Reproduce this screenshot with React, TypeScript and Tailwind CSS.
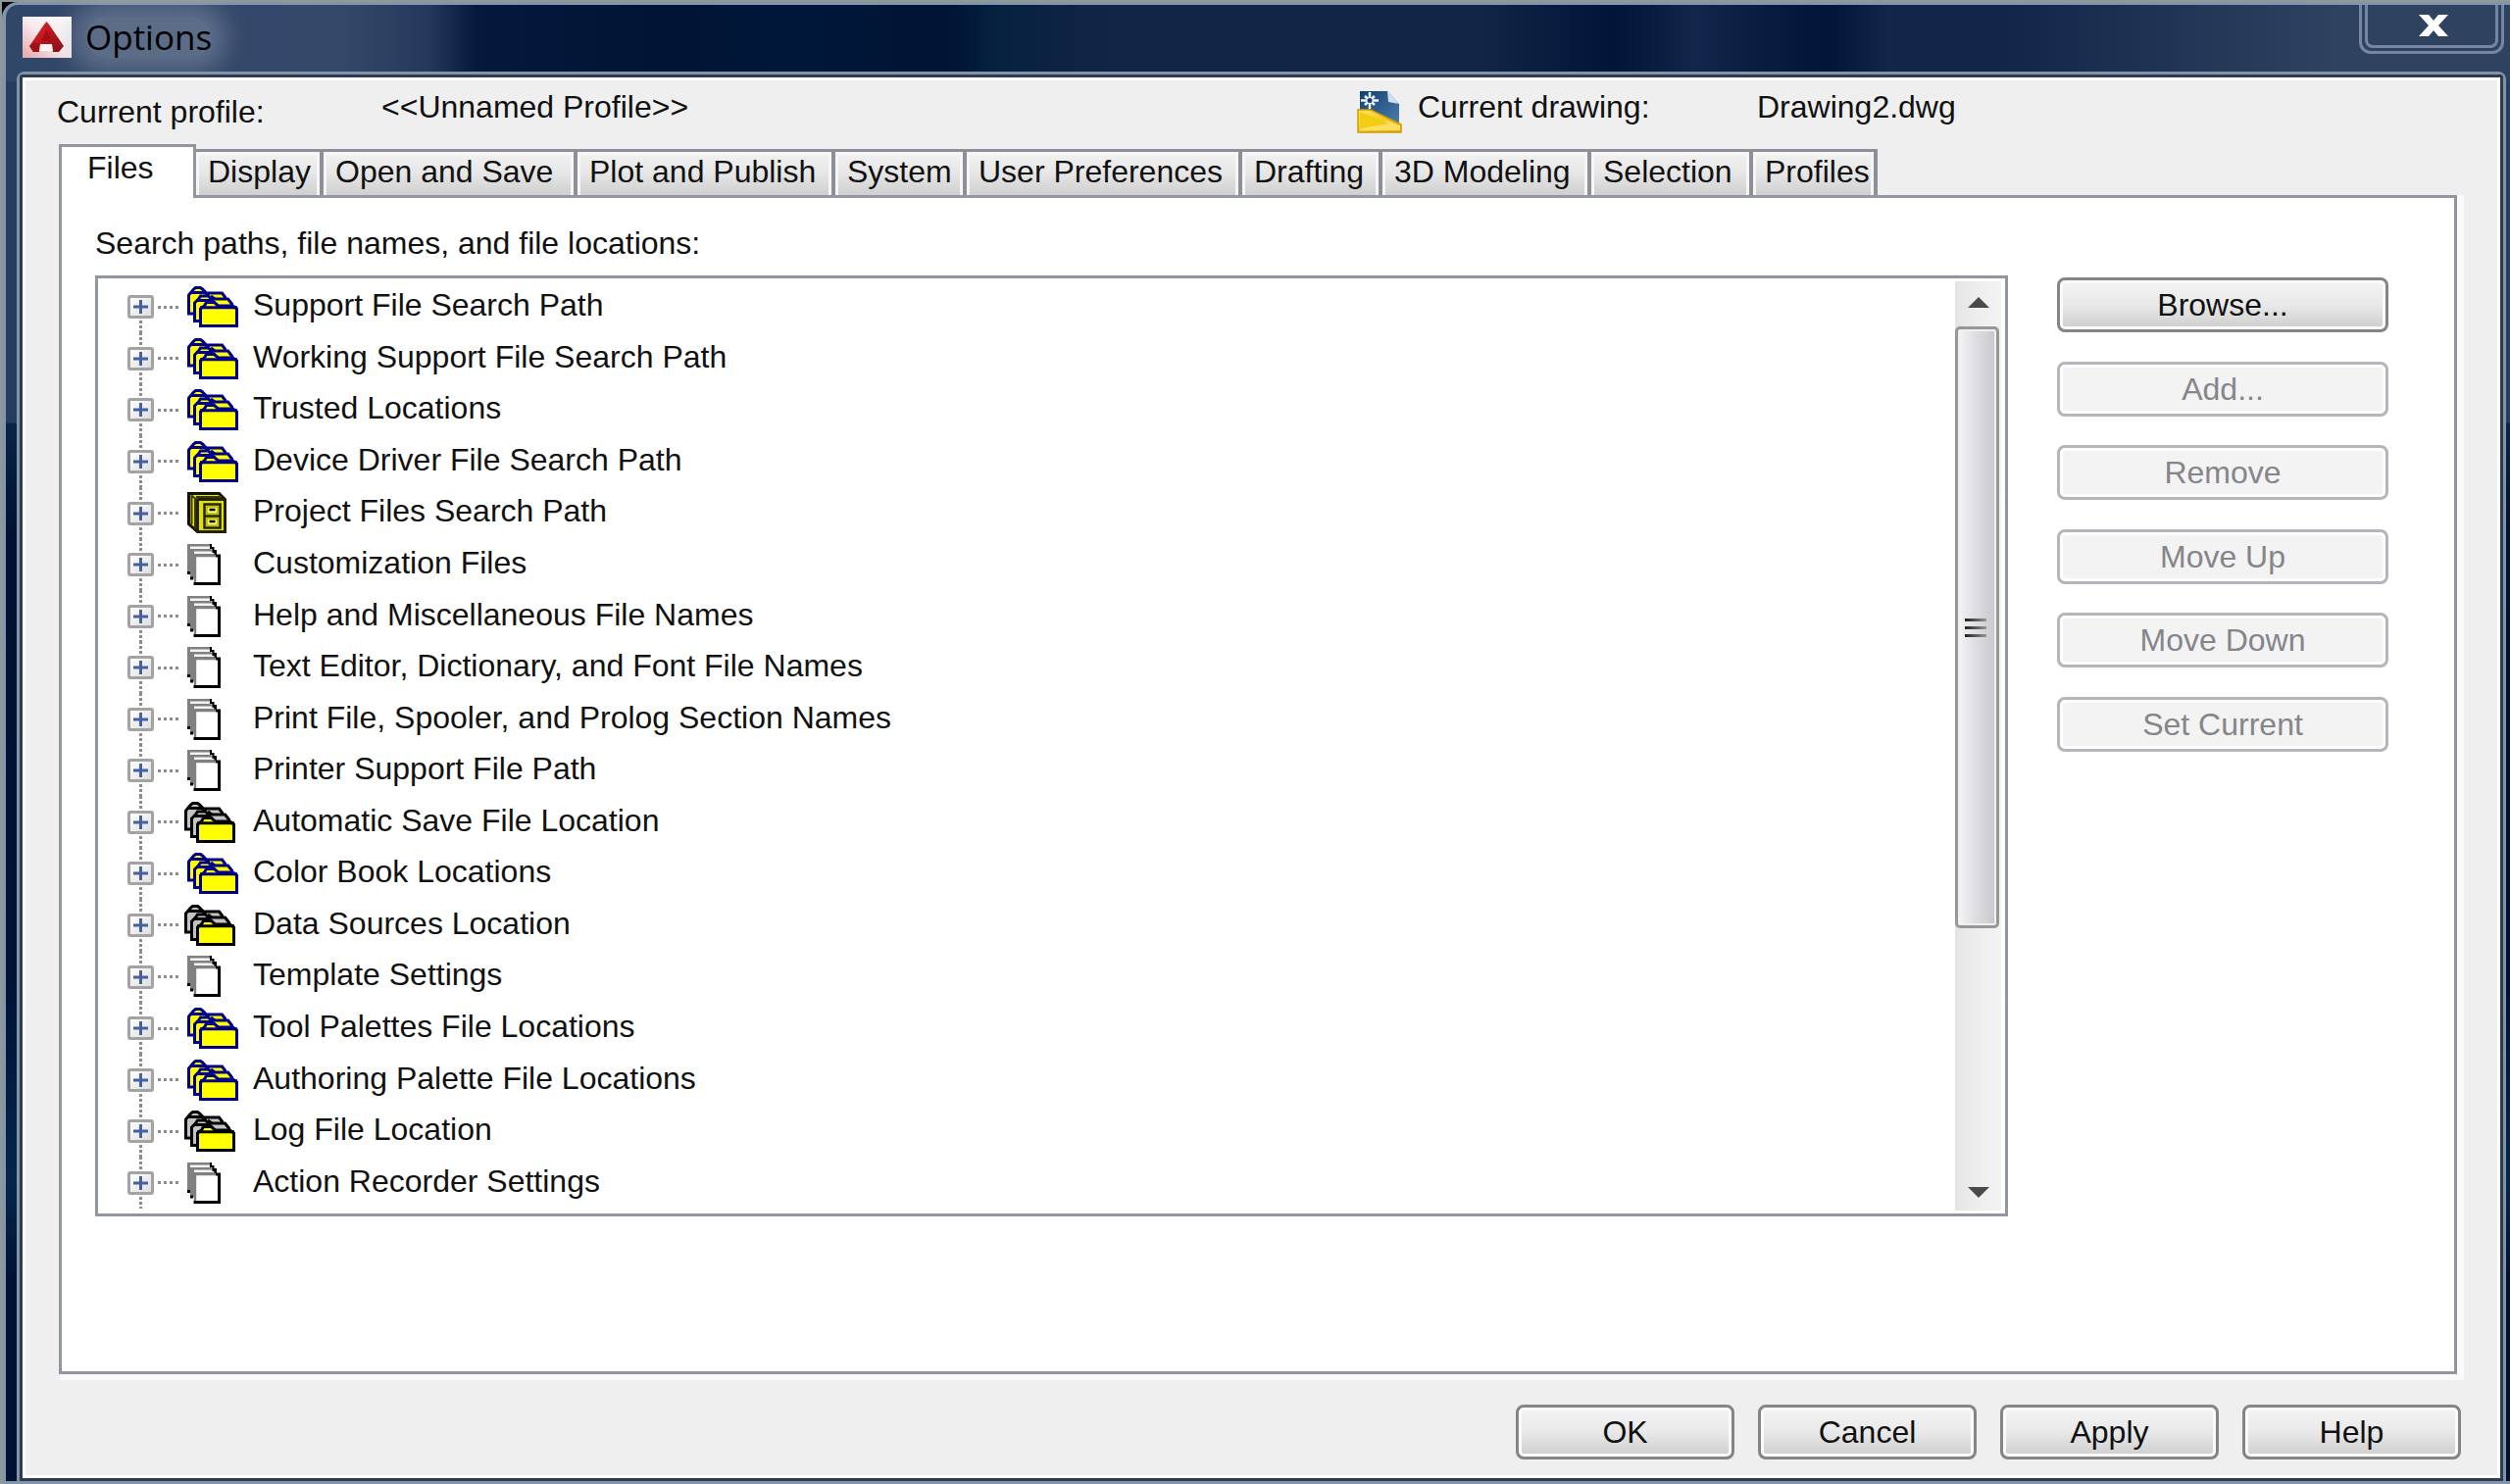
import React, { useState } from "react";

type IconKind = "folders" | "folder" | "cabinet" | "pages";

const tabs = [
  { name: "Display", width: "w-[130px]" },
  { name: "Open and Save", width: "w-[259px]" },
  { name: "Plot and Publish", width: "w-[263px]" },
  { name: "System", width: "w-[134px]" },
  { name: "User Preferences", width: "w-[281px]" },
  { name: "Drafting", width: "w-[143px]" },
  { name: "3D Modeling", width: "w-[213px]" },
  { name: "Selection", width: "w-[165px]" },
  { name: "Profiles", width: "w-[127px]" },
];

const paths: { name: string; icon: IconKind }[] = [
  { name: "Support File Search Path", icon: "folders" },
  { name: "Working Support File Search Path", icon: "folders" },
  { name: "Trusted Locations", icon: "folders" },
  { name: "Device Driver File Search Path", icon: "folders" },
  { name: "Project Files Search Path", icon: "cabinet" },
  { name: "Customization Files", icon: "pages" },
  { name: "Help and Miscellaneous File Names", icon: "pages" },
  { name: "Text Editor, Dictionary, and Font File Names", icon: "pages" },
  { name: "Print File, Spooler, and Prolog Section Names", icon: "pages" },
  { name: "Printer Support File Path", icon: "pages" },
  { name: "Automatic Save File Location", icon: "folder" },
  { name: "Color Book Locations", icon: "folders" },
  { name: "Data Sources Location", icon: "folder" },
  { name: "Template Settings", icon: "pages" },
  { name: "Tool Palettes File Locations", icon: "folders" },
  { name: "Authoring Palette File Locations", icon: "folders" },
  { name: "Log File Location", icon: "folder" },
  { name: "Action Recorder Settings", icon: "pages" },
];

const sideButtons = ["Browse...", "Add...", "Remove", "Move Up", "Move Down", "Set Current"];

function FolderStack({ line, back }: { line: string; back: string }) {
  return (
    <svg width="52" height="42" viewBox="0 0 52 42" aria-hidden="true">
      <g stroke={line} strokeWidth="3">
        <path d="M1.500 28V9l5-6 2-1.500h5l2 1.500 4 4h16l3 4v17z" fill={back} />
        <path d="M3 6.500h15l4 3" fill="none" />
        <path d="M7.500 35.500V17l4-4 2-3h8l3 3h17l4 5v17.500z" fill={back} />
        <path d="M9 14.500h14l5 2M24 10l4 3" fill="none" />
        <path d="M13.500 40.500V23l4-3 2-3.500h8l4 3.500h15l4 3v17.500z" fill="#ffff00" />
        <path d="M13 21.800h38" fill="none" />
      </g>
    </svg>
  );
}

function Cabinet() {
  return (
    <svg width="40" height="42" viewBox="0 0 40 42" aria-hidden="true">
      <path d="M1.500 1.500h31l6 6v33h-28l-9-8z" fill="#e6e600" stroke="#111100" strokeWidth="3" />
      <path d="M4.500 3v30M8 6.500v31M4 3.500l7 5M9 5h26" stroke="#3a3a00" strokeWidth="2" fill="none" />
      <rect x="10.500" y="7.500" width="28" height="33" rx="1" fill="#e2e200" stroke="#222200" strokeWidth="3" />
      <rect x="17.500" y="12.500" width="16" height="24" fill="#f4f400" stroke="#222200" strokeWidth="2.500" />
      <path d="M17 24.500h17" stroke="#222200" strokeWidth="2.500" />
      <rect x="20" y="15" width="11" height="7" fill="#ffff66" stroke="#8a8a00" strokeWidth="1" />
      <rect x="20" y="27" width="11" height="7" fill="#ffff66" stroke="#8a8a00" strokeWidth="1" />
      <path d="M22.500 18h6M22.500 30h6" stroke="#000" strokeWidth="2.500" />
    </svg>
  );
}

function Pages() {
  return (
    <svg width="34" height="42" viewBox="0 0 34 42" aria-hidden="true">
      <path d="M0 0h24v12H7v17H0z" fill="#808080" />
      <path d="M3 2.500h20v2.500H3z" fill="#f4f4f4" />
      <path d="M3 5.500h24v8H7v22H3z" fill="#808080" />
      <path d="M7 7.500h20v2.500H7z" fill="#f4f4f4" />
      <path d="M23 0h2v3h2.500v6h-2V5H23zM27 6h3v6h-2.500zM0 28h3v3H0zM3 33.500h3v3H3z" fill="#000" />
      <path d="M7 11h24v29H7z" fill="#fff" />
      <path d="M8 39V12h21" stroke="#808080" strokeWidth="2.400" fill="none" />
      <path d="M29 12h3.500v28.500H6.500" stroke="#000" strokeWidth="3" fill="none" />
    </svg>
  );
}

function TreeIcon({ kind }: { kind: IconKind }) {
  if (kind === "folders") return <FolderStack line="#00008b" back="#ffff00" />;
  if (kind === "folder") return <FolderStack line="#000000" back="#c4c4c4" />;
  if (kind === "cabinet") return <Cabinet />;
  return <Pages />;
}

function Logo() {
  return (
    <svg width="50" height="42" viewBox="0 0 50 42" aria-hidden="true">
      <defs>
        <linearGradient id="logoBg" x1="0" y1="1" x2="1" y2="0">
          <stop offset="0" stopColor="#e3a5aa" />
          <stop offset="0.500" stopColor="#f8ecee" />
          <stop offset="1" stopColor="#ffffff" />
        </linearGradient>
        <linearGradient id="logoRed" x1="0" y1="0" x2="1" y2="1">
          <stop offset="0" stopColor="#e03038" />
          <stop offset="0.500" stopColor="#bf141c" />
          <stop offset="1" stopColor="#7d0a10" />
        </linearGradient>
      </defs>
      <rect width="50" height="42" fill="url(#logoBg)" />
      <path d="M24.500 5 27 8 42 30l-5 6h-6l-2-7H19l-2 7h-6l-4-6L22 8z" fill="url(#logoRed)" />
      <path d="M24.500 13 19 25h11z" fill="#a50f17" />
      <path d="M7 30l5-4 6 2-2 8h-5z" fill="#a01018" />
      <path d="M18 28h12l1 7H17z" fill="#fbf3f4" />
    </svg>
  );
}

function DrawingIcon() {
  return (
    <svg width="46" height="43" viewBox="0 0 46 43" aria-hidden="true">
      <defs>
        <linearGradient id="dwgGold" x1="0" y1="0" x2="1" y2="1">
          <stop offset="0" stopColor="#ffe95a" />
          <stop offset="1" stopColor="#e2ab00" />
        </linearGradient>
        <linearGradient id="dwgBlue" x1="0" y1="0" x2="1" y2="1">
          <stop offset="0" stopColor="#123f70" />
          <stop offset="1" stopColor="#4f80ae" />
        </linearGradient>
      </defs>
      <path d="M3 0h28l12 13v23H3z" fill="url(#dwgBlue)" />
      <path d="M31 0l12 13-11-2z" fill="#d3e0ec" />
      <path d="M13 1v17M4 9.500h18M8 5l10 9M18 5 8 14" stroke="#eef5fb" strokeWidth="2.500" />
      <circle cx="13" cy="9.500" r="2.500" fill="#123f70" />
      <path d="M1 19h13l31 15v8H1z" fill="url(#dwgGold)" stroke="#d09c00" strokeWidth="1.500" />
      <path d="M3 39 30 30l14 5v5H3z" fill="#fadf62" />
      <path d="M3 21l30 12-30 5z" fill="#f3cd10" />
    </svg>
  );
}

function Button({ children, className }: { children: string; className: string }) {
  return (
    <button
      type="button"
      className={
        "h-14 rounded-lg border-[3px] border-[#858585] bg-linear-to-b from-[#f4f4f4] from-0% via-[#e9e9e9] via-50% to-[#cdcdcd] text-center shadow-[inset_0_0_0_3px_#fafafa] " +
        className
      }
    >
      {children}
    </button>
  );
}

function TitleBar() {
  return (
    <header className="flex h-[68px] items-start justify-between">
      <div className="flex items-center gap-[14px] pt-[12px] pl-[17px]">
        <Logo />
        <h1 className="rounded-full bg-[#9aa6b5]/40 font-['Open_Sans',sans-serif] text-[35px] leading-[42px] text-black shadow-[0_0_24px_16px_rgba(154,166,181,0.4)]">
          Options
        </h1>
      </div>
      <button
        type="button"
        aria-label="Close"
        className="mr-[6px] h-[50px] w-[148px] rounded-b-xl border-[3px] border-t-0 border-[#7587a0] p-[3px] pt-0"
      >
        <span className="flex h-full items-center justify-center rounded-b-lg border-[3px] border-t-0 border-[#7587a0] pl-1">
          <svg width="30" height="24" viewBox="0 0 30 24" aria-hidden="true">
            <path d="M0 1h10l5 6 5-6h10L20 12l10 11H20l-5-6-5 6H0l10-11z" fill="#fff" />
          </svg>
        </span>
      </button>
    </header>
  );
}

function Tree() {
  return (
    <ul className="grid flex-1 auto-rows-fr pt-[3px] pb-[5px] pl-[30px]">
      {paths.map((item, i) => (
        <li key={item.name} className="flex min-h-0 items-center">
          <div className="flex h-full w-[27px] flex-col items-center">
            <span
              className={
                i === 0
                  ? "mb-[2px] w-[3px] flex-1"
                  : "mb-[2px] w-[3px] flex-1 bg-[repeating-linear-gradient(to_top,#8c8c8c_0_3px,transparent_3px_5px)]"
              }
            />
            <button
              type="button"
              aria-label={"Expand " + item.name}
              className="flex h-6 w-[27px] shrink-0 items-center justify-center rounded-[3px] border-[3px] border-[#a3a3a3] bg-linear-to-br from-white to-[#dedede]"
            >
              <svg width="15" height="14" viewBox="0 0 15 14" aria-hidden="true">
                <path d="M0 7h15M7.500 0v14" stroke="#4660a6" strokeWidth="3" />
              </svg>
            </button>
            <span className="mt-[2px] w-[3px] flex-1 bg-[repeating-linear-gradient(to_bottom,#8c8c8c_0_3px,transparent_3px_5px)]" />
          </div>
          <span className="ml-1 h-[3px] w-[23px] bg-[repeating-linear-gradient(to_right,#8c8c8c_0_3px,transparent_3px_6px)]" />
          <span className={item.icon === "folder" ? "w-[74px] pl-1" : "w-[74px] pl-[7px]"}>
            <TreeIcon kind={item.icon} />
          </span>
          <span className="pb-1 leading-10 whitespace-nowrap">{item.name}</span>
        </li>
      ))}
    </ul>
  );
}

function ScrollBar() {
  return (
    <div className="my-[3px] mr-1 flex w-[47px] flex-col bg-linear-to-r from-[#e4e4e4] via-[#eeeeee] to-[#f3f3f3]">
      <button type="button" aria-label="Scroll up" className="flex h-[46px] items-center justify-center pb-1">
        <svg width="22" height="11" viewBox="0 0 22 11" aria-hidden="true">
          <path d="M0 11 11 0l11 11z" fill="#4a4a4a" />
        </svg>
      </button>
      <div className="flex h-[614px] w-[45px] flex-col items-center justify-center gap-[5px] rounded-[5px] border-[3px] border-[#979797] bg-linear-to-r from-[#f5f5f5] from-0% via-[#dcdce0] via-50% to-[#c6c6cc] pr-1 shadow-[inset_0_0_0_2px_#f0f0f0]">
        <span className="h-[3px] w-[22px] bg-linear-to-r from-[#222222] to-[#999999]" />
        <span className="h-[3px] w-[22px] bg-linear-to-r from-[#222222] to-[#999999]" />
        <span className="h-[3px] w-[22px] bg-linear-to-r from-[#222222] to-[#999999]" />
      </div>
      <button type="button" aria-label="Scroll down" className="mt-auto flex h-[38px] items-center justify-center">
        <svg width="22" height="11" viewBox="0 0 22 11" aria-hidden="true">
          <path d="M0 0h22L11 11z" fill="#4a4a4a" />
        </svg>
      </button>
    </div>
  );
}

export default function App() {
  const [active, setActive] = useState("Files");

  return (
    <div className="flex min-h-screen flex-col border-t-2 border-l-2 border-[#8e9a98] bg-black font-['Liberation_Sans',Arial,sans-serif] text-[32px] leading-10 text-[#111111]">
      <div className="flex flex-1 flex-col rounded-tl-[16px] border-t-[3px] border-b-4 border-l-4 border-[#8395ab] bg-[linear-gradient(to_bottom,transparent_0_78px,#263d62_78px_426px,#0a2448_427px,#00122f_540px,#001236_1000px,#06264c_1200px,#001233_1300px),linear-gradient(to_right,#31476a_0,#34486a_340px,#25395c_430px,#04193c_480px,#001435_660px,#001739_800px,#001435_960px,#06213f_1010px,#102445_1100px,#122547_1500px,#001538_1640px,#12254a_1720px,#001538_1860px,#12264a_1920px,#12264a_2040px,#2f4260_2380px)]">
        <TitleBar />

        <div className="mr-1 ml-[11px] flex flex-1 flex-col rounded-t-lg border-[3px] border-b-0 border-[#8193a8]">
          <main className="flex flex-1 flex-col rounded-t-[3px] border-[3px] border-[#2f3b4e] bg-[#efefef] shadow-[inset_0_0_0_3px_#ffffff]">
            <div className="grid h-[68px] grid-cols-[331px_1fr_62px_346px_758px] items-center pt-[2px] pl-[35px]">
              <span>Current profile:</span>
              <span className="pb-[10px]">&lt;&lt;Unnamed Profile&gt;&gt;</span>
              <DrawingIcon />
              <span className="pb-[10px]">Current drawing:</span>
              <span className="pb-[10px]">Drawing2.dwg</span>
            </div>

            <div className="mr-[44px] ml-[37px] flex flex-col">
              <div role="tablist" className="relative flex h-[52px] items-end">
                <button
                  type="button"
                  role="tab"
                  aria-selected={active === "Files"}
                  onClick={() => setActive("Files")}
                  className="-mb-[3px] h-[55px] w-[140px] border-[3px] border-b-0 border-[#9296a0] bg-white pb-[10px] pl-[26px] text-left"
                >
                  Files
                </button>
                {tabs.map((tab) => (
                  <button
                    key={tab.name}
                    type="button"
                    role="tab"
                    aria-selected={active === tab.name}
                    onClick={() => setActive(tab.name)}
                    className={
                      "h-[47px] border-t-[3px] border-r-4 border-[#8d8f99] bg-linear-to-b from-[#f3f3f3] from-0% via-[#e6e6e6] via-50% to-[#cfcfcf] pb-1 pl-3 text-left whitespace-nowrap shadow-[inset_3px_3px_0_#f6f6f6,inset_-3px_0_0_#f6f6f6] " +
                      tab.width
                    }
                  >
                    {tab.name}
                  </button>
                ))}
              </div>

              <section className="h-[1203px] border-[3px] border-[#9296a0] bg-white pt-[26px] pr-[67px] pl-[34px] shadow-[4px_3px_0_3px_#fafafa]">
                <h2 className="mb-[13px]">Search paths, file names, and file locations:</h2>
                <div className="flex items-start gap-[50px]">
                  <div className="flex h-[960px] flex-1 border-[3px] border-[#9296a0]">
                    <Tree />
                    <ScrollBar />
                  </div>
                  <div className="flex h-[486px] w-[338px] flex-col justify-between pt-[2px]">
                    {sideButtons.map((name) =>
                      name === "Browse..." ? (
                        <Button key={name} className="w-full">
                          {name}
                        </Button>
                      ) : (
                        <button
                          key={name}
                          type="button"
                          disabled
                          className="h-14 w-full rounded-lg border-[3px] border-[#b3b6ba] bg-[#f3f3f3] text-center text-[#85858a] shadow-[inset_0_0_0_3px_#fdfdfd]"
                        >
                          {name}
                        </button>
                      )
                    )}
                  </div>
                </div>
              </section>
            </div>

            <footer className="mt-[31px] mb-[19px] flex justify-end gap-6 pr-10">
              <Button className="w-[223px]">OK</Button>
              <Button className="w-[223px]">Cancel</Button>
              <Button className="w-[223px]">Apply</Button>
              <Button className="w-[223px]">Help</Button>
            </footer>
          </main>
        </div>
      </div>
    </div>
  );
}
